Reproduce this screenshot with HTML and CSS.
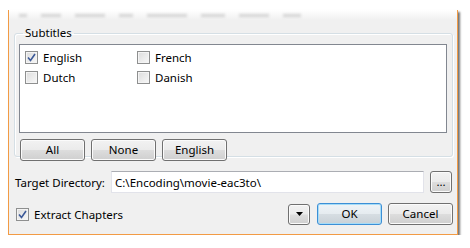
FILE: index.html
```html
<!DOCTYPE html>
<html>
<head>
<meta charset="utf-8">
<link rel="stylesheet" href="styles.css">
</head>
<body>
<div class="win">
  <div class="torn">
    <span class="blob b1"></span><span class="blob b2"></span><span class="blob b3"></span><span class="blob b4"></span><span class="blob b5"></span><span class="blob b6"></span><span class="blob b7"></span><span class="blob b8"></span>
  </div>
  <div class="content">
    <fieldset class="group">
      <legend class="legend">Subtitles</legend>
      <div class="list">
        <label class="chk"><span class="box checked"><svg viewBox="0 0 9 9" width="9" height="9"><path d="M1 4.5 L3.5 7.5 L8 1" fill="none" stroke="#3b5998" stroke-width="1.6"/></svg></span>English</label>
        <label class="chk"><span class="box"></span>French</label>
        <label class="chk"><span class="box"></span>Dutch</label>
        <label class="chk"><span class="box"></span>Danish</label>
      </div>
      <div class="btnrow">
        <button class="btn">All</button>
        <button class="btn">None</button>
        <button class="btn">English</button>
      </div>
    </fieldset>
    <div class="dirrow">
      <span class="lbl">Target Directory:</span>
      <div class="input">C:\Encoding\movie-eac3to\</div>
      <button class="btn small">...</button>
    </div>
    <div class="bottomrow">
      <label class="chk ext"><span class="box checked"><svg viewBox="0 0 9 9" width="9" height="9"><path d="M1 4.5 L3.5 7.5 L8 1" fill="none" stroke="#3b5998" stroke-width="1.6"/></svg></span>Extract Chapters</label>
      <span class="spacer"></span>
      <button class="btn drop"><svg viewBox="0 0 7 4" width="7" height="4"><path d="M0 0 H7 L3.5 4 Z" fill="#000"/></svg></button>
      <button class="btn def">OK</button>
      <button class="btn">Cancel</button>
    </div>
  </div>
</div>
</body>
</html>
```
FILE: styles.css
```css
html, body {
  margin: 0;
  padding: 0;
  background: #fff;
}
body {
  font-family: "Noto Sans", "DejaVu Sans", sans-serif;
  font-size: 11.5px;
  color: #000;
}
.win {
  margin: 10px 0 0 8px;
  width: 448px;
  height: 224px;
  border-left: 1px solid #f29b45;
  border-right: 1px solid #f29b45;
  border-bottom: 1px solid #f29b45;
  background: #f0f0f0;
  box-shadow: 2px 2px 2px rgba(0,0,0,0.55);
  display: flex;
  flex-direction: column;
}
.torn {
  height: 10px;
  background: linear-gradient(#ffffff, #f6f6f6 60%, #f0f0f0);
  display: flex;
  align-items: center;
  gap: 14px;
  padding: 0 10px;
  overflow: hidden;
}
.blob {
  display: block;
  height: 3px;
  background: #b4b4b4;
  filter: blur(1.8px);
  opacity: 0.55;
}
.b1 { width: 8px; }
.b2 { width: 20px; }
.b3 { width: 30px; }
.b4 { width: 14px; }
.b5 { width: 40px; }
.b6 { width: 24px; }
.b7 { width: 30px; }
.b8 { width: 18px; }
.content {
  flex: 1;
  padding: 0 4px 0 5px;
  display: flex;
  flex-direction: column;
}
.group {
  margin: 5px 0 0 0;
  padding: 3px 5px 3px 4px;
  border: 1px solid #d5dfe5;
  border-radius: 3px;
  box-shadow: inset 1px 1px 0 #fff, 1px 1px 0 #fff;
  height: 132px;
  box-sizing: border-box;
  min-width: 0;
}
.legend {
  padding: 0 2px;
  margin-left: 4px;
  line-height: 16px;
}
.list {
  height: 89px;
  box-sizing: border-box;
  background: #fff;
  border: 1px solid #828790;
  padding: 6px 5px;
  display: grid;
  grid-template-columns: 112px 112px;
  grid-auto-rows: 20px;
  align-content: start;
}
.chk {
  display: flex;
  align-items: center;
  gap: 5px;
  height: 13px;
}
.box {
  width: 13px;
  height: 13px;
  box-sizing: border-box;
  border: 1px solid #8e8f8f;
  background: linear-gradient(135deg, #dcdcdc, #f8f8f8);
  box-shadow: inset 0 0 0 1px #f4f4f4;
  display: flex;
  align-items: center;
  justify-content: center;
  flex: none;
}
.box.checked svg { display: block; }
.btnrow {
  margin-top: 6px;
  display: flex;
  gap: 6px;
  padding-left: 1px;
}
.btn {
  font-family: inherit;
  font-size: inherit;
  color: #000;
  width: 65px;
  height: 22px;
  padding: 0;
  border: 1px solid #707070;
  border-radius: 3px;
  background: linear-gradient(#f2f2f2 0%, #ebebeb 48%, #dddddd 52%, #cfcfcf 100%);
  box-shadow: inset 0 0 0 1px #fbfbfb;
  display: flex;
  align-items: center;
  justify-content: center;
  line-height: 1;
}
.dirrow {
  margin-top: 14px;
  display: flex;
  align-items: center;
  height: 22px;
}
.lbl {
  width: 96px;
  padding-left: 1px;
}
.input {
  width: 313px;
  height: 22px;
  box-sizing: border-box;
  background: #fff;
  border: 1px solid #e2e3ea;
  border-top-color: #abadb3;
  padding-left: 3px;
  display: flex;
  align-items: center;
  white-space: nowrap;
}
.btn.small {
  width: 22px;
  height: 22px;
  margin-left: 6px;
  align-items: flex-end;
  padding-bottom: 5px;
  box-sizing: border-box;
}
.bottomrow {
  margin-top: 10px;
  display: flex;
  align-items: center;
  gap: 6px;
  height: 22px;
}
.ext {
  margin-left: 2px;
}
.spacer { flex: 1; }
.btn.drop {
  width: 22px;
  height: 21px;
  margin-right: 1px;
}
.btn.def {
  border-color: #3c8fd6;
  box-shadow: inset 0 0 0 1px #a6dcf7;
  background: linear-gradient(#eef3f7 0%, #e6ecf0 48%, #d6dde2 52%, #c9d1d7 100%);
}
```
